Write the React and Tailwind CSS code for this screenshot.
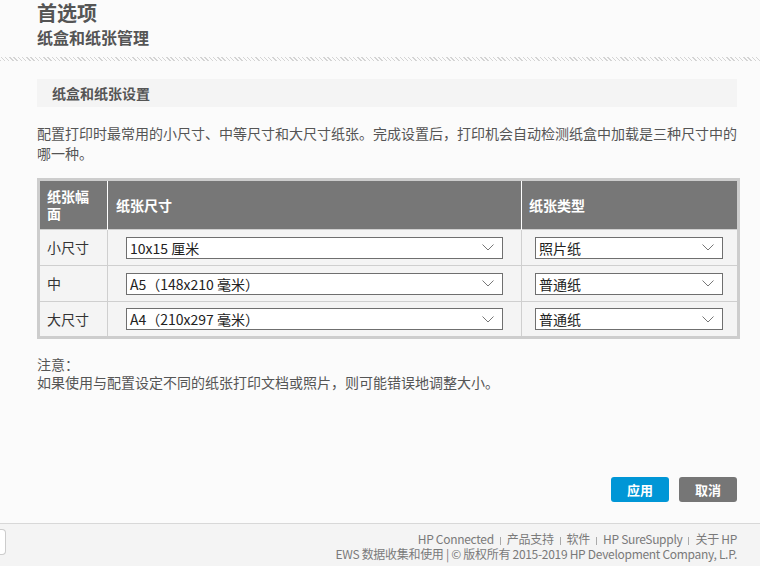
import React from 'react';

const font = { fontFamily: '"Noto Sans CJK SC", "Noto Sans", sans-serif' };

function Chevron() {
    return (
        <svg width="12" height="7" viewBox="0 0 12 7" className="shrink-0">
            <path d="M0.5 0.5 L6 6 L11.5 0.5" fill="none" stroke="#777" strokeWidth="1" />
        </svg>
    );
}

function Select({ value, className }) {
    return (
        <div className={`h-[22px] bg-white border border-[#6f6f6f] flex items-center justify-between pl-[3px] pr-[8px] text-[14px] text-[#222] ${className}`}>
            <span className="leading-none">{value}</span>
            <Chevron />
        </div>
    );
}

const rows = [
    { label: '小尺寸', size: '10x15 厘米', type: '照片纸' },
    { label: '中', size: 'A5（148x210 毫米）', type: '普通纸' },
    { label: '大尺寸', size: 'A4（210x297 毫米）', type: '普通纸' },
];

function Sep() {
    return <span className="inline-block w-px h-[8px] bg-[#aaa] mx-[6px] align-middle"></span>;
}

export default function App() {
    return (
        <div className="w-[760px] h-[566px] bg-[#fbfbfb] flex flex-col overflow-hidden" style={font}>
            {/* Title */}
            <div className="px-[37px]">
                <h1 className="text-[20px] leading-[26px] font-bold text-[#555]">首选项</h1>
                <h2 className="text-[16px] leading-[22px] font-bold text-[#555]">纸盒和纸张管理</h2>
            </div>

            <div className="mt-[9px] h-[4px] w-full bg-[repeating-linear-gradient(45deg,#d4d4d4_0_1px,transparent_1px_3px)]"></div>

            <div className="px-[37px]">
                {/* Section header */}
                <div className="mt-[18px] w-[700px] h-[28px] bg-[#f4f4f4] flex items-center pl-[15px] text-[14px] font-bold text-[#555]">
                    纸盒和纸张设置
                </div>

                <p className="mt-[16px] w-[702px] text-[14px] leading-[20px] text-[#555]">
                    配置打印时最常用的小尺寸、中等尺寸和大尺寸纸张。完成设置后，打印机会自动检测纸盒中加载是三种尺寸中的哪一种。
                </p>

                {/* Table */}
                <table className="mt-[15px] w-[703px] border-collapse border-[3px] border-[#cdcdcd] text-[14px]">
                    <thead>
                        <tr className="bg-[#777] text-white font-bold h-[50px]">
                            <th className="w-[69px] text-left font-bold px-[7px] leading-[17px] border-r border-white">纸张幅面</th>
                            <th className="w-[414px] text-left font-bold pl-[8px] border-r border-white">纸张尺寸</th>
                            <th className="text-left font-bold pl-[7px]">纸张类型</th>
                        </tr>
                    </thead>
                    <tbody>
                        {rows.map((r, i) => (
                            <tr key={i} className="h-[36px] bg-[#f4f4f4] border-t border-[#cfcfcf]">
                                <td className="px-[7px] text-[#333] border-r border-[#cfcfcf]">{r.label}</td>
                                <td className="pl-[18px] pr-[18px] border-r border-[#cfcfcf]">
                                    <Select value={r.size} className="w-[377px]" />
                                </td>
                                <td className="pl-[13px]">
                                    <Select value={r.type} className="w-[188px]" />
                                </td>
                            </tr>
                        ))}
                    </tbody>
                </table>

                <div className="mt-[16px] text-[14px] leading-[18px] text-[#555]">
                    <div>注意：</div>
                    <div>如果使用与配置设定不同的纸张打印文档或照片，则可能错误地调整大小。</div>
                </div>
            </div>

            <div className="flex-1"></div>

            {/* Buttons */}
            <div className="flex justify-end gap-[10px] pr-[23px]">
                <button className="w-[58px] h-[25px] rounded-[3px] bg-[#0096d6] text-white text-[13px] font-bold">应用</button>
                <button className="w-[58px] h-[25px] rounded-[3px] bg-[#767676] text-white text-[13px] font-bold">取消</button>
            </div>

            {/* Footer */}
            <div className="mt-[21px] h-[43px] border-t border-[#d8d8d8] bg-[#f4f4f4] flex items-start justify-between">
                <div className="mt-[5px] w-[6px] h-[26px] bg-white border border-l-0 border-[#ccc] rounded-r-[4px]"></div>
                <div className="pt-[7px] pr-[23px] text-right text-[12px] leading-[15px] tracking-[-0.3px] text-[#7a7a7a]">
                    <div>
                        HP Connected<Sep />产品支持<Sep />软件<Sep />HP SureSupply<Sep />关于 HP
                    </div>
                    <div>EWS 数据收集和使用 | © 版权所有 2015-2019 HP Development Company, L.P.</div>
                </div>
            </div>
        </div>
    );
}
